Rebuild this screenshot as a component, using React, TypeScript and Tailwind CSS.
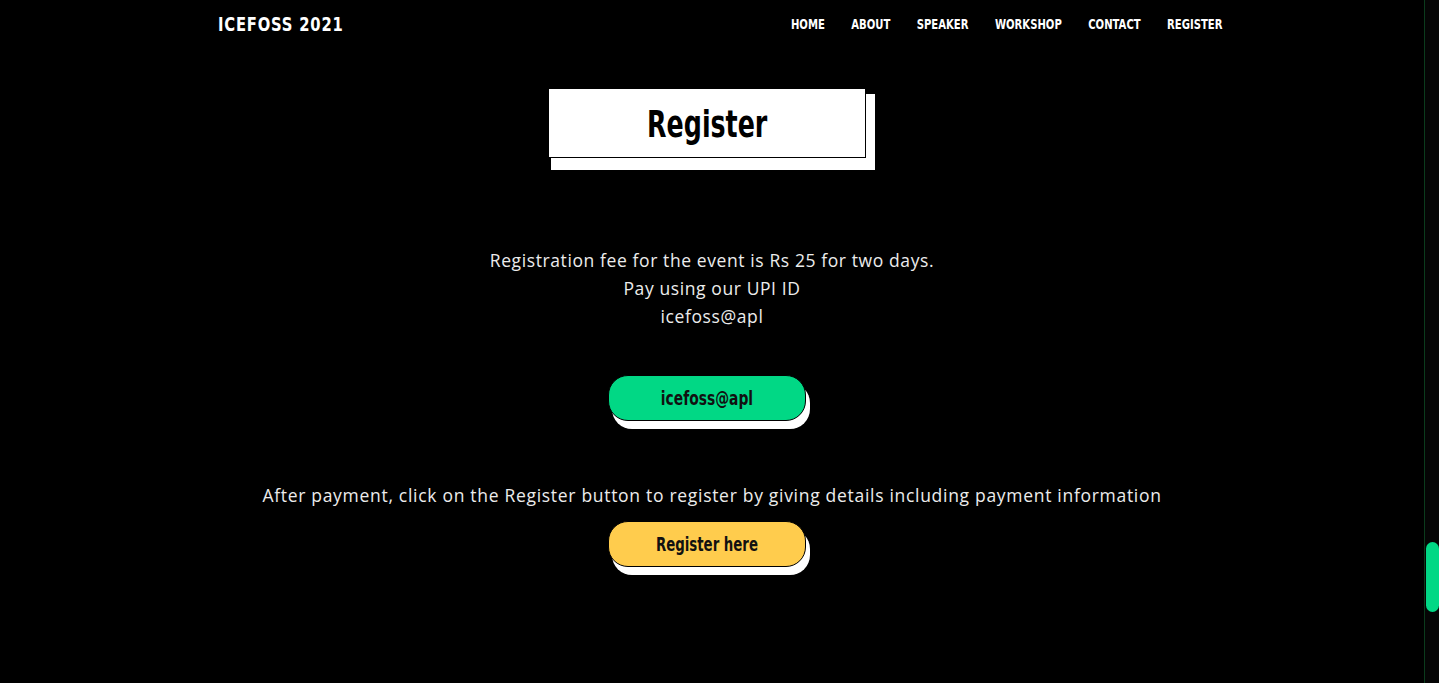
const heading = { fontFamily: '"DejaVu Sans Condensed", "Liberation Sans", sans-serif' };
const body = { fontFamily: '"Open Sans", "Liberation Sans", sans-serif' };

const links = ["HOME", "ABOUT", "SPEAKER", "WORKSHOP", "CONTACT", "REGISTER"];

export default function App() {
  return (
    <div className="flex h-[683px] overflow-hidden bg-black">
      <div className="flex-1">
        <nav className="flex h-12 items-center justify-between pl-[218px] pr-[202px]" style={heading}>
          <a href="#" className="inline-block origin-left scale-x-[0.82] text-[20px] font-bold tracking-[1px] text-white">
            ICEFOSS 2021
          </a>
          <div className="flex origin-right scale-x-[0.8] gap-[33px]">
            {links.map((l) => (
              <a key={l} href="#" className="text-[14px] font-bold text-white">
                {l}
              </a>
            ))}
          </div>
        </nav>

        <main className="flex flex-col items-center">
          <div className="mt-[40px] pr-[10px]">
            <div className="flex h-[70px] w-[318px] items-center justify-center border border-black bg-white shadow-[6px_9px_0_3px_white]">
              <h1 className="mt-[3px] inline-block scale-x-[0.74] text-[38px] font-bold text-black" style={heading}>
                Register
              </h1>
            </div>
          </div>

          <div className="mt-[88px] text-center text-[17.5px] leading-[28px] tracking-[0.6px] text-[#ececec]" style={body}>
            <p>Registration fee for the event is Rs 25 for two days.</p>
            <p>Pay using our UPI ID</p>
            <p>icefoss@apl</p>
          </div>

          <div className="mt-[45px] mr-[10px]">
            <button
              className="h-[46px] w-[198px] rounded-[20px] border border-black bg-[#01d885] text-[#111] shadow-[4px_8px_0_white]"
              style={heading}
            >
              <span className="inline-block scale-x-[0.77] text-[20px] font-semibold">icefoss@apl</span>
            </button>
          </div>

          <p className="mt-[60px] text-center text-[17.5px] leading-[28px] tracking-[0.7px] text-[#ececec]" style={body}>
            After payment, click on the Register button to register by giving details including payment information
          </p>

          <div className="mt-[12px] mr-[10px]">
            <button
              className="h-[46px] w-[198px] rounded-[20px] border border-black bg-[#ffcc4d] text-[#111] shadow-[4px_8px_0_white]"
              style={heading}
            >
              <span className="inline-block scale-x-[0.74] text-[20px] font-semibold">Register here</span>
            </button>
          </div>
        </main>
      </div>

      <div className="flex w-[15px] justify-center border-l border-[#0b3b1c] bg-[#050505]">
        <div className="mt-[542px] h-[70px] w-[13px] rounded-full bg-[#01d885]" />
      </div>
    </div>
  );
}
